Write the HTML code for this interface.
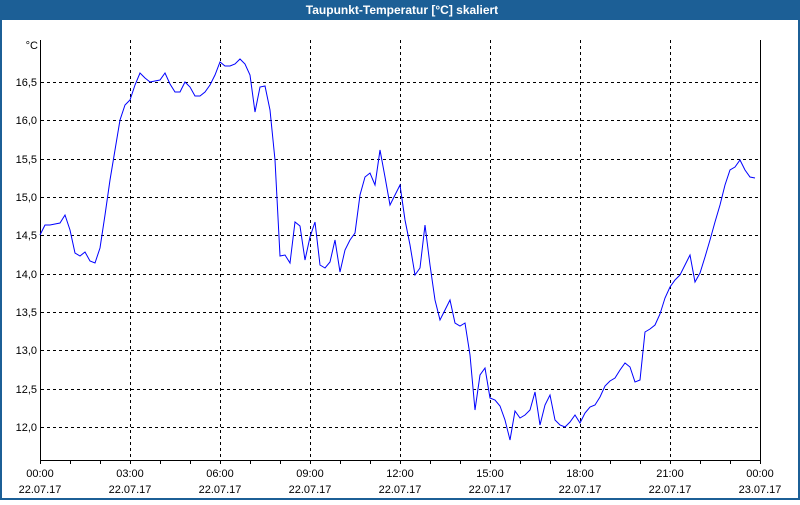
<!DOCTYPE html>
<html><head><meta charset="utf-8"><style>
html,body{margin:0;padding:0;background:#fff}
body{width:800px;height:500px;overflow:hidden;font-family:"Liberation Sans",sans-serif}
</style></head><body>
<svg width="800" height="500" xmlns="http://www.w3.org/2000/svg" font-family="Liberation Sans, sans-serif" font-size="11">
<rect x="0" y="0" width="800" height="500" fill="#1c5f96"/>
<rect x="2" y="20" width="796" height="478" fill="#fff"/>
<text x="402" y="14" fill="#fff" font-weight="bold" font-size="12" text-anchor="middle">Taupunkt-Temperatur [°C] skaliert</text>
<g stroke="#000" stroke-dasharray="3,3" stroke-width="1" shape-rendering="crispEdges">
<line x1="41" y1="82.5" x2="760" y2="82.5"/><line x1="41" y1="120.5" x2="760" y2="120.5"/><line x1="41" y1="159.5" x2="760" y2="159.5"/><line x1="41" y1="197.5" x2="760" y2="197.5"/><line x1="41" y1="235.5" x2="760" y2="235.5"/><line x1="41" y1="274.5" x2="760" y2="274.5"/><line x1="41" y1="312.5" x2="760" y2="312.5"/><line x1="41" y1="350.5" x2="760" y2="350.5"/><line x1="41" y1="389.5" x2="760" y2="389.5"/><line x1="41" y1="427.5" x2="760" y2="427.5"/>
<line x1="130.5" y1="40" x2="130.5" y2="460"/><line x1="220.5" y1="40" x2="220.5" y2="460"/><line x1="310.5" y1="40" x2="310.5" y2="460"/><line x1="400.5" y1="40" x2="400.5" y2="460"/><line x1="490.5" y1="40" x2="490.5" y2="460"/><line x1="580.5" y1="40" x2="580.5" y2="460"/><line x1="670.5" y1="40" x2="670.5" y2="460"/>
</g>
<g stroke="#000" stroke-width="1" shape-rendering="crispEdges" fill="none">
<polyline points="40.5,40 40.5,460.5 760.5,460.5 760.5,40"/>
<path d="M40.5 461v3M70.5 461v3M100.5 461v3M130.5 461v3M160.5 461v3M190.5 461v3M220.5 461v3M250.5 461v3M280.5 461v3M310.5 461v3M340.5 461v3M370.5 461v3M400.5 461v3M430.5 461v3M460.5 461v3M490.5 461v3M520.5 461v3M550.5 461v3M580.5 461v3M610.5 461v3M640.5 461v3M670.5 461v3M700.5 461v3M730.5 461v3M760.5 461v3"/>
</g>
<polyline fill="none" stroke="#0000ff" stroke-width="1" points="40,235 45,225 50,225 55,224 60,223 65,215 70,230 75,253 80,256 85,252 90,261 95,263 100,248 105,215 110,180 115,150 120,120 125,105 130,100 135,85 140,73 145,78 150,82 155,81 160,80 165,73 170,84 175,92 180,92 185,82 190,87 195,96 200,96 205,92 210,85 215,75 220,62 225,66 230,66 235,64 240,59 245,64 250,75 255,112 260,87 265,86 270,110 275,160 280,256 285,255 290,263 295,222 300,226 305,260 310,237 315,222 320,265 325,268 330,262 335,240 340,272 345,250 350,240 355,233 360,195 365,177 370,173 375,185 380,150 385,177 390,205 395,195 400,185 405,220 410,245 415,275 420,268 425,225 430,265 435,300 440,320 445,310 450,300 455,323 460,326 465,323 470,355 475,410 480,375 485,368 490,398 495,400 500,406 505,420 510,440 515,411 520,418 525,415 530,410 535,392 540,425 545,405 550,395 555,420 560,425 565,427 570,422 575,415 580,423 585,413 590,407 595,405 600,397 605,386 610,381 615,378 620,370 625,363 630,367 635,382 640,380 645,332 650,329 655,325 660,314 665,298 670,287 675,280 680,275 685,265 690,255 695,282 700,273 705,257 710,240 715,222 720,205 725,185 730,170 735,167 740,160 745,170 750,177 755,178"/>
<g fill="#000" text-anchor="end">
<text x="38" y="49">°C</text>
<text x="37" y="86">16,5</text><text x="37" y="124">16,0</text><text x="37" y="163">15,5</text><text x="37" y="201">15,0</text><text x="37" y="239">14,5</text><text x="37" y="278">14,0</text><text x="37" y="316">13,5</text><text x="37" y="354">13,0</text><text x="37" y="393">12,5</text><text x="37" y="431">12,0</text>
</g>
<g fill="#000" text-anchor="middle">
<text x="40" y="477">00:00</text><text x="40" y="493">22.07.17</text>
<text x="130" y="477">03:00</text><text x="130" y="493">22.07.17</text>
<text x="220" y="477">06:00</text><text x="220" y="493">22.07.17</text>
<text x="310" y="477">09:00</text><text x="310" y="493">22.07.17</text>
<text x="400" y="477">12:00</text><text x="400" y="493">22.07.17</text>
<text x="490" y="477">15:00</text><text x="490" y="493">22.07.17</text>
<text x="580" y="477">18:00</text><text x="580" y="493">22.07.17</text>
<text x="670" y="477">21:00</text><text x="670" y="493">22.07.17</text>
<text x="760" y="477">00:00</text><text x="760" y="493">23.07.17</text>
</g>
</svg>
</body></html>
